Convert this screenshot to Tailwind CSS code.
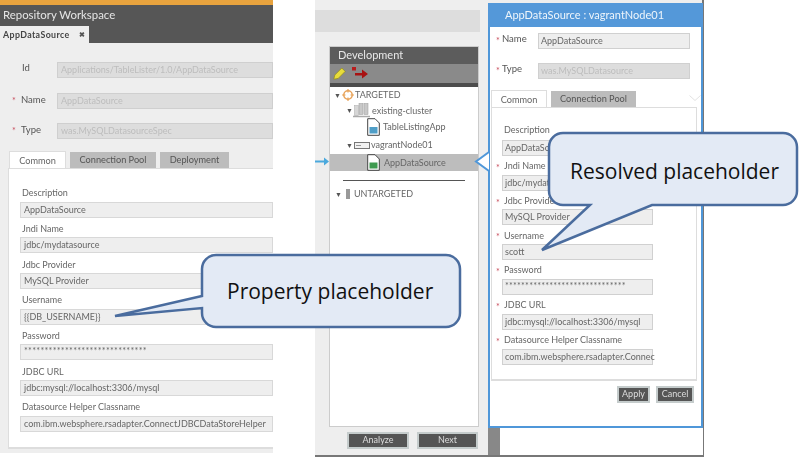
<!DOCTYPE html>
<html lang="en">
<head>
  <meta charset="UTF-8">
  <title>Property placeholder</title>
  <script src="https://cdn.jsdelivr.net/npm/@tailwindcss/browser@4"></script>
</head>
<body class="bg-white">
<div class="relative w-[800px] h-[459px] overflow-hidden bg-white font-['Lato','Open_Sans',sans-serif] text-[9px] text-[#666]">

  <!-- Repository Workspace window -->
  <section class="absolute left-0 top-0 w-[273px] h-[453px] bg-[#eeeeee] blur-[0.4px] overflow-hidden">
    <div class="h-[5px] bg-[#e8a33e]"></div>
    <div class="h-[38px] bg-[#565656] relative">
      <h1 class="pl-[3px] pt-[1px] text-[11.4px] leading-[17px] text-[#e6e6e6]">Repository Workspace</h1>
      <div class="absolute left-0 bottom-0 w-[89px] h-[17px] bg-[#eeeeee] flex items-center pl-[3px] text-[8.8px] font-bold tracking-[0.4px] text-[#444]">
        AppDataSource<span class="ml-[9px] text-[7px] leading-none text-[#555]">✖</span>
      </div>
    </div>

    <div class="flex flex-col gap-[14.5px] pt-[19px]">
      <div class="flex items-center h-[16px]">
        <span class="w-[22px]"></span><span class="w-[35px] mb-[3px] text-[#555] text-[9.5px]">Id</span>
        <div class="flex-1 h-[16px] bg-[#dddddd] border border-[#cfcfcf] pl-[3px] leading-[14px] text-[#bdbdbd]">Applications/TableLister/1.0/AppDataSource</div>
      </div>
      <div class="flex items-center h-[16px]">
        <span class="w-[21px] pl-[12px] text-[#c9505f] text-[9px]">*</span><span class="w-[36px] mb-[1px] text-[#555] text-[9.5px]">Name</span>
        <div class="flex-1 h-[16px] bg-[#dddddd] border border-[#cfcfcf] pl-[3px] leading-[14px] text-[#bdbdbd]">AppDataSource</div>
      </div>
      <div class="flex items-center h-[16px]">
        <span class="w-[21px] pl-[12px] text-[#c9505f] text-[9px]">*</span><span class="w-[36px] mb-[1px] text-[#555] text-[9.5px]">Type</span>
        <div class="flex-1 h-[16px] bg-[#dddddd] border border-[#cfcfcf] pl-[3px] leading-[14px] text-[#bdbdbd]">was.MySQLDatasourceSpec</div>
      </div>
    </div>

    <div class="flex items-end h-[16px] mt-[13px] pl-[9px] gap-[4px] text-[9.2px]">
      <div class="w-[57px] h-[17px] bg-white border border-b-0 border-[#dddddd] text-center leading-[17px]">Common</div>
      <div class="w-[86px] h-[16px] bg-[#bcbcbc] text-center leading-[15px] text-[#555]">Connection Pool</div>
      <div class="w-[69px] h-[16px] bg-[#bcbcbc] text-center leading-[15px] text-[#555]">Deployment</div>
    </div>

    <div class="ml-[8px] h-[281px] bg-white border-l border-b-2 border-t border-[#dddddd] pl-[11px] pt-[13px]">
      <div class="h-[35.7px]"><div class="h-[19.7px] flex items-end pb-[2px] pl-[2px]">Description</div><div class="h-[16px] bg-[#eeeeee] border border-[#d8d8d8] pl-[3px] leading-[14px]">AppDataSource</div></div>
      <div class="h-[35.7px]"><div class="h-[19.7px] flex items-end pb-[2px] pl-[2px]">Jndi Name</div><div class="h-[16px] bg-[#eeeeee] border border-[#d8d8d8] pl-[3px] leading-[14px]">jdbc/mydatasource</div></div>
      <div class="h-[35.7px]"><div class="h-[19.7px] flex items-end pb-[2px] pl-[2px]">Jdbc Provider</div><div class="h-[16px] bg-[#eeeeee] border border-[#d8d8d8] pl-[3px] leading-[14px]">MySQL Provider</div></div>
      <div class="h-[35.7px]"><div class="h-[19.7px] flex items-end pb-[2px] pl-[2px]">Username</div><div class="h-[16px] bg-[#eeeeee] border border-[#d8d8d8] pl-[3px] leading-[14px]">{{DB_USERNAME}}</div></div>
      <div class="h-[35.7px]"><div class="h-[19.7px] flex items-end pb-[2px] pl-[2px]">Password</div><div class="h-[16px] bg-[#eeeeee] border border-[#d8d8d8] pl-[3px] leading-[12px] tracking-[0.27px]">******************************</div></div>
      <div class="h-[35.7px]"><div class="h-[19.7px] flex items-end pb-[2px] pl-[2px]">JDBC URL</div><div class="h-[16px] bg-[#eeeeee] border border-[#d8d8d8] pl-[3px] leading-[14px]">jdbc:mysql://localhost:3306/mysql</div></div>
      <div class="h-[35.7px]"><div class="h-[19.7px] flex items-end pb-[2px] pl-[2px]">Datasource Helper Classname</div><div class="h-[16px] bg-[#eeeeee] border border-[#d8d8d8] pl-[3px] leading-[14px] whitespace-nowrap">com.ibm.websphere.rsadapter.ConnectJDBCDataStoreHelper</div></div>
    </div>
  </section>

  <!-- Deployment window -->
  <section class="absolute left-[315px] top-0 w-[389px] h-[457px] bg-[#eeeeee] border-r-2 border-b-2 border-[#777777] flex blur-[0.4px]">
    <div class="w-[164px] pl-[14px] flex flex-col shrink-0">
      <div class="-ml-[14px] mt-[10px] h-[22px] w-[165px] bg-[#dddddd] shrink-0"></div>
      <div class="mt-[14px] w-[150px] h-[381px] bg-white border border-[#cccccc] shrink-0 flex flex-col">
        <div class="h-[17px] bg-[#5c5c5c] pl-[8px] text-[11px] leading-[16px] text-[#e8e8e8]">Development</div>
        <div class="h-[19px] bg-[#8a8a8a] flex items-center pl-[3px] gap-[6px]">
          <svg width="13" height="13" viewBox="0 0 13 13"><path d="M.8 12.200l1-4.200 7-7 3.400 3.400-7 7z" fill="#e8dc3a" stroke="#8f8a20" stroke-width=".7"/></svg>
          <svg width="16" height="13" viewBox="0 0 16 13"><rect x="0" y="0" width="4" height="3.500" fill="#b81c1c"/><path d="M3 6h7V2.500l6 4.500-6 4.500V8.500H3z" fill="#a81212"/></svg>
        </div>
        <div class="h-[4px] bg-[#4c4c4c]"></div>
        <div class="flex items-center h-[16px] pl-[4px]">
          <span class="w-[8px] text-[7px] text-[#555]">▼</span>
          <svg width="12" height="12" viewBox="0 0 12 12"><circle cx="6" cy="6" r="4.200" fill="none" stroke="#e8a35a" stroke-width="1.500"/><path d="M6 0v3.500M6 8.500V12M0 6h3.500M8.500 6H12" stroke="#e8a35a" stroke-width="1.200"/></svg>
          <span class="ml-[1px]">TARGETED</span>
        </div>
        <div class="flex items-center h-[15px] pl-[16px]">
          <span class="w-[7px] text-[7px] text-[#555]">▼</span>
          <svg width="17" height="15" viewBox="0 0 17 15"><rect x="6" y="0.500" width="4" height="11" fill="#c8c8c8" stroke="#999" stroke-width=".5"/><rect x="11" y="0.500" width="4" height="11" fill="#c8c8c8" stroke="#999" stroke-width=".5"/><rect x="1.500" y="2.500" width="4" height="10" fill="#d6d6d6" stroke="#aaa" stroke-width=".5"/><path d="M0 13.500h17" stroke="#aaa" stroke-width="1.500"/></svg>
          <span class="ml-[2px]">existing-cluster</span>
        </div>
        <div class="flex items-center h-[18px] pl-[37px]">
          <svg width="13" height="18" viewBox="0 0 13 18"><path d="M.7.700H8l4.300 4.300V17.300H.7z" fill="#fff" stroke="#444" stroke-width="1"/><rect x="2.500" y="9" width="8" height="6.500" fill="#4f9ec7"/></svg>
          <span class="ml-[3px]">TableListingApp</span>
        </div>
        <div class="flex items-center h-[18px] pl-[16px]">
          <span class="w-[8px] text-[7px] text-[#555]">▼</span>
          <svg width="16" height="7" viewBox="0 0 16 7"><rect x=".5" y=".5" width="15" height="6" fill="#f2f2f2" stroke="#777"/><path d="M2 3.500h5" stroke="#999"/></svg>
          <span class="ml-[1px]">vagrantNode01</span>
        </div>
        <div class="flex items-center h-[17px] pl-[37px] bg-[#bdbdbd]">
          <svg width="13" height="17" viewBox="0 0 13 17"><path d="M.7.700H8l4.300 4.300V16.300H.7z" fill="#fff" stroke="#444" stroke-width="1"/><rect x="2.500" y="8.500" width="8" height="6" fill="#3f9a50"/></svg>
          <span class="ml-[4px]">AppDataSource</span>
        </div>
        <div class="mx-[13px] mt-[9px] w-[122px] h-px bg-[#555555]"></div>
        <div class="flex items-center h-[12px] mt-[7px] pl-[5px]">
          <span class="w-[11px] text-[7px] text-[#555]">▼</span>
          <span class="w-[4px] h-[10px] bg-[#999999]"></span>
          <span class="ml-[4px]">UNTARGETED</span>
        </div>
      </div>
      <div class="flex gap-[8px] mt-[5px] ml-[18px]">
        <div class="w-[62px] h-[17px] bg-[#555555] border-2 border-[#c5cccc] text-center text-[9px] leading-[12px] text-[#dddddd]">Analyze</div>
        <div class="w-[61px] h-[17px] bg-[#555555] border-2 border-[#c5cccc] text-center text-[9px] leading-[12px] text-[#dddddd]">Next</div>
      </div>
    </div>

    <div class="w-[9px] shrink-0"></div>

    <div class="flex-1 flex flex-col">
      <div class="mt-[3px] h-[425px] bg-white border-2 border-t-0 border-[#4f97d9] flex flex-col">
        <h2 class="h-[24px] -mx-[2px] bg-[#5498d9] pl-[17px] text-[11px] leading-[24px] text-[#eef5fb]">AppDataSource : vagrantNode01</h2>
        <div class="flex items-center h-[16px] mt-[6px]">
          <span class="w-[12px] pl-[6px] text-[#c9505f] text-[9px]">*</span><span class="w-[36px] mb-[3px] text-[#555] text-[9.5px]">Name</span>
          <div class="w-[152px] h-[16px] bg-[#eeeeee] border border-[#d0d0d0] pl-[2px] leading-[14px]">AppDataSource</div>
        </div>
        <div class="flex items-center h-[16px] mt-[14px]">
          <span class="w-[12px] pl-[6px] text-[#c9505f] text-[9px]">*</span><span class="w-[36px] mb-[3px] text-[#555] text-[9.5px]">Type</span>
          <div class="w-[152px] h-[16px] bg-[#dddddd] border border-[#d0d0d0] pl-[2px] leading-[14px] text-[#bdbdbd]">was.MySQLDatasource</div>
        </div>
        <div class="flex items-end h-[16px] mt-[12px] pl-[1px] gap-[4px] text-[9.2px]">
          <div class="w-[56px] h-[17px] bg-white border border-b-0 border-[#dddddd] text-center leading-[17px]">Common</div>
          <div class="w-[85px] h-[16px] bg-[#bcbcbc] text-center leading-[15px] text-[#555]">Connection Pool</div>
          <svg width="12" height="6" viewBox="0 0 12 6" class="ml-[49px] mb-[6px]"><path d="M.5.500l5.500 5 5.500-5" fill="none" stroke="#e2e2e2"/></svg>
        </div>
        <div class="ml-[1px] w-[206px] h-[274px] border border-t border-b-2 border-[#dddddd] pt-[13px]">
          <div class="h-[34.8px] pl-[10px]"><div class="h-[18.800px] flex items-end pb-[3px] pl-[2px]">Description</div><div class="w-[151px] h-[16px] bg-[#eeeeee] border border-[#d0d0d0] pl-[2px] leading-[14px]">AppDataSource</div></div>
          <div class="h-[34.8px] pl-[10px] relative"><span class="absolute left-[4px] top-[5px] text-[#c9505f] text-[9px]">*</span><div class="h-[18.800px] flex items-end pb-[2px] pl-[2px]">Jndi Name</div><div class="w-[151px] h-[16px] bg-[#eeeeee] border border-[#d0d0d0] pl-[2px] leading-[14px]">jdbc/mydatasource</div></div>
          <div class="h-[34.8px] pl-[10px] relative"><span class="absolute left-[4px] top-[5px] text-[#c9505f] text-[9px]">*</span><div class="h-[18.800px] flex items-end pb-[2px] pl-[2px]">Jdbc Provider</div><div class="w-[151px] h-[16px] bg-[#eeeeee] border border-[#d0d0d0] pl-[2px] leading-[14px]">MySQL Provider</div></div>
          <div class="h-[34.8px] pl-[10px] relative"><span class="absolute left-[4px] top-[5px] text-[#c9505f] text-[9px]">*</span><div class="h-[18.800px] flex items-end pb-[2px] pl-[2px]">Username</div><div class="w-[151px] h-[16px] bg-[#eeeeee] border border-[#d0d0d0] pl-[2px] leading-[14px]">scott</div></div>
          <div class="h-[34.8px] pl-[10px] relative"><span class="absolute left-[4px] top-[5px] text-[#c9505f] text-[9px]">*</span><div class="h-[18.800px] flex items-end pb-[2px] pl-[2px]">Password</div><div class="w-[151px] h-[16px] bg-[#eeeeee] border border-[#d0d0d0] pl-[2px] leading-[12px] tracking-[0.2px]">******************************</div></div>
          <div class="h-[34.8px] pl-[10px] relative"><span class="absolute left-[4px] top-[5px] text-[#c9505f] text-[9px]">*</span><div class="h-[18.800px] flex items-end pb-[2px] pl-[2px]">JDBC URL</div><div class="w-[151px] h-[16px] bg-[#eeeeee] border border-[#d0d0d0] pl-[2px] leading-[14px]">jdbc:mysql://localhost:3306/mysql</div></div>
          <div class="h-[34.8px] pl-[10px] relative"><span class="absolute left-[4px] top-[5px] text-[#c9505f] text-[9px]">*</span><div class="h-[18.800px] flex items-end pb-[2px] pl-[2px]">Datasource Helper Classname</div><div class="w-[151px] h-[16px] bg-[#eeeeee] border border-[#d0d0d0] pl-[2px] leading-[14px] whitespace-nowrap">com.ibm.websphere.rsadapter.Connec</div></div>
        </div>
        <div class="flex justify-end gap-[6px] mt-[5px] pr-[7px]">
          <div class="w-[33px] h-[17px] bg-[#555555] border-2 border-[#c5cccc] text-center text-[9px] leading-[12px] text-[#dddddd]">Apply</div>
          <div class="w-[38px] h-[17px] bg-[#555555] border-2 border-[#c5cccc] text-center text-[9px] leading-[12px] text-[#dddddd]">Cancel</div>
        </div>
      </div>
      <div class="flex-1 flex">
        <div class="w-[12px] bg-[#888888]"></div>
        <div class="flex-1 bg-white"></div>
      </div>
    </div>
  </section>

  <!-- Selection markers -->
  <svg class="absolute left-[315px] top-[155px] blur-[0.4px]" width="15" height="13" viewBox="0 0 15 13"><path d="M0 6.500h11" stroke="#4ba9dd" stroke-width="2"/><path d="M9 2.500l5 4-5 4z" fill="#4ba9dd"/></svg>
  <svg class="absolute left-[474px] top-[151px] blur-[0.4px]" width="16" height="21" viewBox="0 0 16 21"><path d="M15 1L2 10.500 15 20z" fill="#ffffff"/><path d="M15 1L2 10.500 15 20" fill="none" stroke="#4f97d9" stroke-width="2"/></svg>

  <!-- Callouts -->
  <div class="absolute left-[110px] top-[252px] w-[353px] h-[78px]">
    <svg class="absolute inset-0" width="353" height="78" viewBox="0 0 353 78">
      <path d="M106 3H336a14 14 0 0 1 14 14V61a14 14 0 0 1-14 14H106a14 14 0 0 1-14-14V56L5 64 92 44V17a14 14 0 0 1 14-14z" fill="#e3eaf5" stroke="#4a6c9e" stroke-width="2.500"/>
    </svg>
    <p class="absolute left-[117px] top-[24px] font-['Open_Sans',sans-serif] text-[21px] leading-[30px] text-[#111] whitespace-nowrap">Property placeholder</p>
  </div>
  <div class="absolute left-[538px] top-[131px] w-[262px] h-[124px]">
    <svg class="absolute inset-0" width="262" height="124" viewBox="0 0 262 124">
      <path d="M25 2H245a14 14 0 0 1 14 14V60a14 14 0 0 1-14 14H114L4 119 52 74H25a14 14 0 0 1-14-14V16a14 14 0 0 1 14-14z" fill="#e3eaf5" stroke="#4a6c9e" stroke-width="2.500"/>
    </svg>
    <p class="absolute left-[32px] top-[25px] font-['Open_Sans',sans-serif] text-[21px] leading-[30px] text-[#111] whitespace-nowrap">Resolved placeholder</p>
  </div>
</div>
</body>
</html>
